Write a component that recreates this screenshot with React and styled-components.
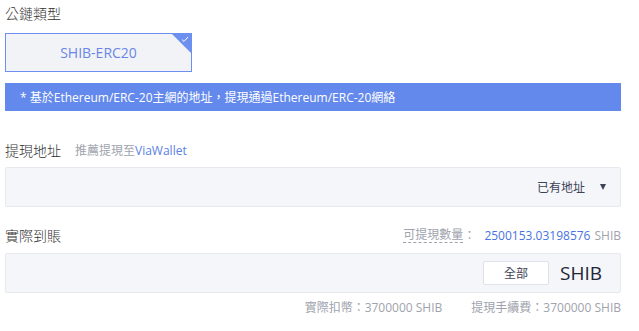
import React from 'react';
import styled, { createGlobalStyle } from 'styled-components';

const Global = createGlobalStyle`
  html, body { margin: 0; padding: 0; background: #fff; }
  body { font-family: "Open Sans", "Noto Sans CJK TC", sans-serif; }
`;

const Page = styled.div`
  width: 616px;
  padding: 0 5px;
  display: flex;
  flex-direction: column;
`;

const Label = styled.div`
  font-size: 14px;
  line-height: 20px;
  color: #333;
  font-weight: 300;
  font-family: "Noto Sans CJK TC", sans-serif;
`;

const LabelRow = styled.div`
  display: flex;
  align-items: center;
  justify-content: space-between;
  margin-top: ${p => p.$mt}px;
  height: 20px;
`;

const LabelLeft = styled.div`
  display: flex;
  align-items: center;
  gap: 14px;
`;

const Hint = styled.span`
  font-size: 12px;
  color: #a0a3ad;
`;

const Link = styled.span`
  color: #5a7fe6;
`;

const ChainCard = styled.div`
  position: relative;
  margin-top: 10px;
  width: 185px;
  height: 37px;
  border: 1px solid #6d8ff0;
  background: #f2f3f7;
  display: flex;
  align-items: center;
  justify-content: center;
  font-size: 14px;
  color: #6a86e8;
  overflow: hidden;
`;

const Corner = styled.div`
  position: absolute;
  top: 0;
  right: 0;
  width: 0;
  height: 0;
  border-top: 19px solid #6d8ff0;
  border-left: 19px solid transparent;
`;

const Check = styled.svg`
  position: absolute;
  top: 2px;
  right: 2px;
`;

const Banner = styled.div`
  margin-top: 11px;
  height: 28px;
  background: #6389ec;
  color: #fff;
  font-size: 12px;
  display: flex;
  align-items: center;
  padding-left: 15px;
`;

const InputBox = styled.div`
  margin-top: ${p => p.$mt}px;
  height: 38px;
  border: 1px solid #e7e9ef;
  border-radius: 2px;
  background: #f5f6fa;
  display: flex;
  align-items: center;
  justify-content: flex-end;
  padding-right: ${p => p.$pr}px;
`;

const SelectText = styled.span`
  font-size: 12px;
  color: #3d4256;
`;

const Caret = styled.span`
  width: 0;
  height: 0;
  border-left: 3.5px solid transparent;
  border-right: 3.5px solid transparent;
  border-top: 6px solid #3d4256;
  margin-left: 15px;
`;

const Avail = styled.div`
  font-size: 12px;
  display: flex;
  align-items: center;
`;

const AvailLabel = styled.span`
  color: #a0a3ad;
  border-bottom: 1px dashed #a0a3ad;
  line-height: 14px;
`;

const Colon = styled.span`
  color: #a0a3ad;
  margin-right: 9px;
`;

const AvailNum = styled.span`
  color: #4a73e0;
`;

const Unit = styled.span`
  color: #a0a3ad;
  margin-left: 4px;
`;

const AllBtn = styled.button`
  width: 66px;
  height: 24px;
  background: #fff;
  border: 1px solid #dfe2ea;
  border-radius: 2px;
  font-size: 12px;
  color: #3d4256;
  font-family: "Open Sans", "Noto Sans CJK TC", sans-serif;
  padding: 0;
  margin-right: 11px;
`;

const BigUnit = styled.span`
  font-size: 19px;
  color: #222636;
`;

const Footer = styled.div`
  margin-top: 7px;
  display: flex;
  justify-content: flex-end;
  gap: 29px;
  font-size: 12px;
  line-height: 16px;
  color: #a0a3ad;
`;

export default function App() {
  return (
    <>
      <Global />
      <Page>
        <LabelRow $mt={3}>
          <Label>公鏈類型</Label>
        </LabelRow>
        <ChainCard>
          SHIB-ERC20
          <Corner />
          <Check width="8" height="7" viewBox="0 0 8 7">
            <path d="M1 3.6 L3 5.5 L7 1" stroke="#fff" strokeWidth="1" fill="none" />
          </Check>
        </ChainCard>
        <Banner>* 基於Ethereum/ERC-20主網的地址，提現通過Ethereum/ERC-20網絡</Banner>
        <LabelRow $mt={29}>
          <LabelLeft>
            <Label>提現地址</Label>
            <Hint>推薦提現至<Link>ViaWallet</Link></Hint>
          </LabelLeft>
        </LabelRow>
        <InputBox $mt={7} $pr={14}>
          <SelectText>已有地址</SelectText>
          <Caret />
        </InputBox>
        <LabelRow $mt={18}>
          <Label>實際到賬</Label>
          <Avail>
            <AvailLabel>可提現數量</AvailLabel>
            <Colon>：</Colon>
            <AvailNum>2500153.03198576</AvailNum>
            <Unit>SHIB</Unit>
          </Avail>
        </LabelRow>
        <InputBox $mt={8} $pr={18}>
          <AllBtn>全部</AllBtn>
          <BigUnit>SHIB</BigUnit>
        </InputBox>
        <Footer>
          <span>實際扣幣：3700000 SHIB</span>
          <span>提現手續費：3700000 SHIB</span>
        </Footer>
      </Page>
    </>
  );
}
